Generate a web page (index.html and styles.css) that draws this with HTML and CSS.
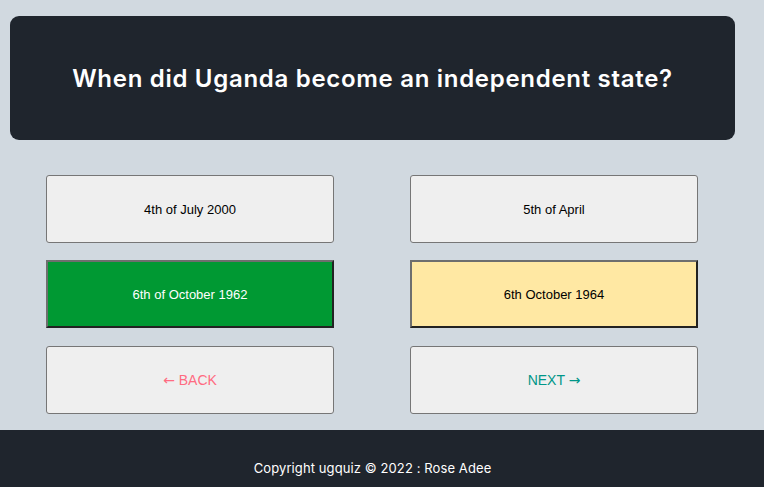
FILE: index.html
```html
<!DOCTYPE html>
<html lang="en">
<head>
<meta charset="utf-8">
<title>ugquiz</title>
<link rel="stylesheet" href="styles.css">
</head>
<body>
<main class="page">
  <section class="question-card">
    <h1 class="question">When did Uganda become an independent state?</h1>
  </section>
  <section class="answers">
    <button class="btn">4th of July 2000</button>
    <button class="btn">5th of April</button>
    <button class="btn btn-correct">6th of October 1962</button>
    <button class="btn btn-selected">6th October 1964</button>
    <button class="btn btn-nav btn-back"><span class="arrow">&larr;</span> BACK</button>
    <button class="btn btn-nav btn-next">NEXT <span class="arrow">&rarr;</span></button>
  </section>
</main>
<footer class="footer">
  <p class="copyright">Copyright ugquiz &copy; 2022 : Rose Adee</p>
</footer>
</body>
</html>
```
FILE: styles.css
```css
* { box-sizing: border-box; }
html, body { margin: 0; padding: 0; }
body {
  background: #d1d9e0;
  font-family: "Inter", "Open Sans", sans-serif;
  overflow: hidden;
}
.page {
  padding: 16px 29px 16px 10px;
}
.question-card {
  background: #1f252d;
  border-radius: 9px;
  height: 124px;
  display: flex;
  align-items: center;
  justify-content: center;
}
.question {
  margin: 0;
  color: #fff;
  font-family: "Inter", sans-serif;
  font-weight: 600;
  font-size: 24px;
  letter-spacing: 0.7px;
}
.answers {
  margin: 35px 0 0 36px;
  display: grid;
  grid-template-columns: 288px 288px;
  column-gap: 76px;
  row-gap: 17px;
}
.btn {
  height: 68px;
  background: #efefef;
  border: 1px solid #767676;
  border-radius: 3px;
  font-family: "Liberation Sans", Arial, sans-serif;
  font-size: 13px;
  color: #000;
  padding: 0;
}
.btn-correct {
  background: #009933;
  color: #fff;
  border: 2px solid;
  border-color: #6e6e6e #222 #222 #6e6e6e;
  border-radius: 0;
}
.btn-selected {
  background: #ffe8a3;
  border: 2px solid;
  border-color: #6e6e6e #222 #222 #6e6e6e;
  border-radius: 0;
}
.btn-nav {
  font-size: 14px;
  margin-top: 1px;
}
.btn-back { color: #ff6b81; }
.btn-next { color: #009688; }
.arrow {
  font-family: "DejaVu Sans", sans-serif;
  font-size: 14px;
}
.footer {
  background: #1f252d;
  height: 57px;
  padding: 30px 19px 0 0;
  text-align: center;
}
.copyright {
  margin: 0;
  color: #fff;
  font-size: 13px;
  font-family: "Inter", sans-serif;
  letter-spacing: 0.1px;
}
```
